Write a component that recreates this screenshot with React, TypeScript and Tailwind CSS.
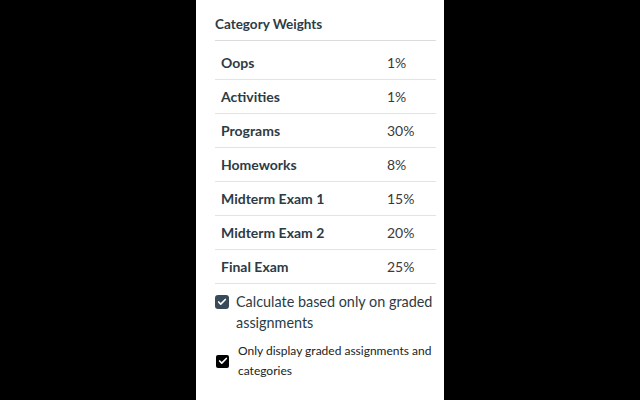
import { Check } from "lucide-react";

const weights = [
  { name: "Oops", pct: "1%" },
  { name: "Activities", pct: "1%" },
  { name: "Programs", pct: "30%" },
  { name: "Homeworks", pct: "8%" },
  { name: "Midterm Exam 1", pct: "15%" },
  { name: "Midterm Exam 2", pct: "20%" },
  { name: "Final Exam", pct: "25%" },
];

export default function App() {
  return (
    <div className="w-[640px] h-[400px] bg-black flex font-['Lato','Liberation_Sans',sans-serif] text-[#2d3b45]">
      <div className="ml-[196px] w-[248px] h-full bg-white pl-[19px] pr-[8px] pt-[15px]">
        {/* Header */}
        <h2 className="text-[13.5px] font-bold leading-[18px] pb-[7px] border-b border-[#dcdcdc]">
          Category Weights
        </h2>

        {/* Weights table */}
        <div className="mt-[5px]">
          {weights.map((w) => (
            <div
              key={w.name}
              className="grid grid-cols-[172px_1fr] h-[34px] items-center border-b border-[#e3e3e3] text-[14px]"
            >
              <span className="pl-[6px] font-bold">{w.name}</span>
              <span className="text-[#3a3a3a]">{w.pct}</span>
            </div>
          ))}
        </div>

        {/* Options */}
        <div className="mt-[7px] flex items-start gap-[7px]">
          <div className="mt-[4px] w-[14px] h-[14px] shrink-0 rounded-[3px] bg-[#394b58] flex items-center justify-center">
            <Check className="w-[10px] h-[10px] text-white" strokeWidth={4} />
          </div>
          <p className="text-[14.4px] leading-[21px]">Calculate based only on graded assignments</p>
        </div>

        <div className="mt-[8px] flex items-center gap-[9px]">
          <div className="w-[13px] h-[13px] ml-[1px] shrink-0 rounded-[2px] bg-black flex items-center justify-center">
            <Check className="w-[10px] h-[10px] text-white" strokeWidth={4} />
          </div>
          <p className="text-[12px] leading-[20px] text-[#222]">Only display graded assignments and categories</p>
        </div>
      </div>
    </div>
  );
}
